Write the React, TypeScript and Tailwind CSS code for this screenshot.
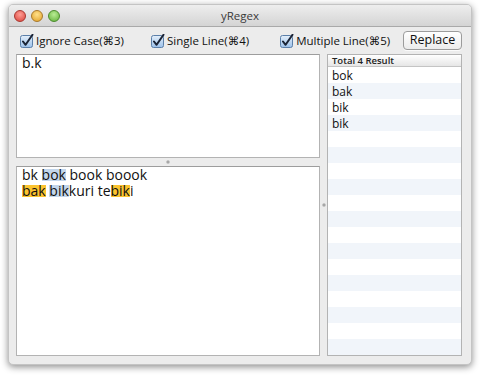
import React from "react";

const font = { fontFamily: '"Open Sans", "DejaVu Sans", sans-serif' };

function Check() {
  return (
    <svg width="14" height="14" viewBox="0 0 14 14" className="shrink-0">
      <defs>
        <linearGradient id="cbg" x1="0" y1="0" x2="0" y2="1">
          <stop offset="0" stopColor="#e4effa" />
          <stop offset="1" stopColor="#9cc1ea" />
        </linearGradient>
      </defs>
      <rect x="0.5" y="1.5" width="12" height="12" rx="2" fill="url(#cbg)" stroke="#5b7fa9" />
      <path d="M3 7.5 L5.6 10.8 L12.5 0.8" fill="none" stroke="#1b2436" strokeWidth="2" strokeLinecap="round" strokeLinejoin="round" />
    </svg>
  );
}

function Light({ c1, c2, b }: { c1: string; c2: string; b: string }) {
  return (
    <div
      className="w-[12px] h-[12px] rounded-full border"
      style={{ background: `radial-gradient(circle at 50% 35%, ${c1}, ${c2})`, borderColor: b }}
    />
  );
}

function Dot() {
  return <div className="w-[4px] h-[4px] rounded-full bg-[#9a9a9a] border border-[#c8c8c8]" />;
}

export default function App() {
  const results = ["bok", "bak", "bik", "bik"];
  const rows = Array.from({ length: 20 }, (_, i) => results[i] ?? "");
  const blue =
    "bg-[linear-gradient(#c3d6eb,#c3d6eb)] bg-no-repeat bg-[length:100%_12px] bg-[position:0_55%]";
  const yellow =
    "bg-[linear-gradient(#fcc430,#fcc430)] bg-no-repeat bg-[length:100%_12px] bg-[position:0_55%]";
  return (
    <div className="w-[480px] h-[375px] bg-white pt-[4px] pl-[8px] overflow-hidden" style={font}>
      <div className="w-[464px] h-[361px] rounded-[5px] bg-[#ececec] flex flex-col shadow-[0_2px_7px_rgba(0,0,0,0.45)] border border-[#c4c4c4] overflow-hidden">
        {/* title bar */}
        <div className="h-[22px] shrink-0 grid grid-cols-[1fr_auto_1fr] items-center bg-gradient-to-b from-[#eeeeee] to-[#d4d4d4] border-b border-[#a9a9a9]">
          <div className="flex items-center gap-[5px] pl-[5px]">
            <Light c1="#ff9d94" c2="#d9443b" b="#a8352e" />
            <Light c1="#ffe08a" c2="#e2a128" b="#a8782a" />
            <Light c1="#b9ec94" c2="#62b13a" b="#4a8a2c" />
          </div>
          <div className="text-[11.5px] text-[#3a3a3a]">yRegex</div>
          <div />
        </div>
        {/* toolbar */}
        <div className="h-[27px] shrink-0 flex items-center pl-[11px] pr-[9px] text-[11.5px] text-[#111]">
          <div className="flex items-center gap-[2px]">
            <Check />
            <span>Ignore Case(⌘3)</span>
          </div>
          <div className="flex items-center gap-[2px] ml-[27px]">
            <Check />
            <span>Single Line(⌘4)</span>
          </div>
          <div className="flex items-center gap-[2px] ml-[31px]">
            <Check />
            <span>Multiple Line(⌘5)</span>
          </div>
          <button className="ml-auto w-[59px] h-[19px] rounded-[4px] border border-[#9c9c9c] bg-gradient-to-b from-white to-[#ececec] text-[12.5px] text-[#111] leading-none flex items-center justify-center shadow-[0_1px_0_rgba(255,255,255,0.8)]">
            Replace
          </button>
        </div>
        {/* content */}
        <div className="flex-1 flex pl-[7px] pr-[9px] pb-[8px] min-h-0">
          <div className="w-[304px] flex flex-col">
            <div className="h-[104px] shrink-0 bg-white border border-[#b3b3b3] border-t-[#9d9d9d] px-[5px] text-[14px] leading-[16px] text-[#111]">
              b.k
            </div>
            <div className="h-[8px] shrink-0 flex items-center justify-center">
              <Dot />
            </div>
            <div className="flex-1 bg-white border border-[#b3b3b3] border-t-[#9d9d9d] px-[5px] text-[14px] leading-[16px] text-[#111]">
              <div>
                bk <span className={blue}>bok</span> book boook
              </div>
              <div>
                <span className={yellow}>bak</span> <span className={blue}>bik</span>kuri te
                <span className={yellow}>bik</span>i
              </div>
            </div>
          </div>
          <div className="w-[7px] shrink-0 flex items-center justify-center">
            <Dot />
          </div>
          <div className="flex-1 flex flex-col bg-white border border-[#b3b3b3] overflow-hidden">
            <div className="h-[12px] shrink-0 bg-gradient-to-b from-white to-[#e6e6e6] border-b border-[#c4c4c4] pl-[4px] text-[9.5px] font-semibold leading-[11px] text-[#222]">
              Total 4 Result
            </div>
            <div className="flex-1 overflow-hidden">
              {rows.map((r, i) => (
                <div
                  key={i}
                  className={`h-[16px] pl-[4px] text-[12px] leading-[17px] text-[#111] ${i % 2 === 1 ? "bg-[#f1f5fa]" : "bg-white"}`}
                >
                  {r}
                </div>
              ))}
            </div>
          </div>
        </div>
      </div>
    </div>
  );
}
